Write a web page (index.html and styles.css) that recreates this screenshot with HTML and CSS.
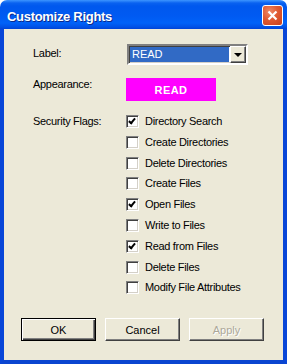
FILE: index.html
```html
<!DOCTYPE html>
<html lang="en">
<head>
    <meta charset="UTF-8">
    <title>Customize Rights</title>
    <link rel="stylesheet" href="styles.css">
</head>
<body>
    <div class="window">
        <div class="titlebar">
            <span class="title">Customize Rights</span>
            <button class="close" type="button" aria-label="Close">
                <svg width="11" height="11" viewBox="0 0 11 11">
                    <path d="M1.5 1.5 L9.5 9.5 M9.5 1.5 L1.5 9.5" stroke="#fff" stroke-width="2.2" fill="none"/>
                </svg>
            </button>
        </div>
        <div class="body">
            <div class="row row-label-line">
                <div class="field-label">Label:</div>
                <div class="select">
                    <div class="select-value">READ</div>
                    <div class="select-arrow"><span class="tri"></span></div>
                </div>
            </div>
            <div class="row row-appearance">
                <div class="field-label">Appearance:</div>
                <div class="swatch">READ</div>
            </div>
            <div class="row row-flags">
                <div class="field-label">Security Flags:</div>
                <div class="flags">
                    <label class="flag"><span class="box checked"></span>Directory Search</label>
                    <label class="flag"><span class="box"></span>Create Directories</label>
                    <label class="flag"><span class="box"></span>Delete Directories</label>
                    <label class="flag"><span class="box"></span>Create Files</label>
                    <label class="flag"><span class="box checked"></span>Open Files</label>
                    <label class="flag"><span class="box"></span>Write to Files</label>
                    <label class="flag"><span class="box checked"></span>Read from Files</label>
                    <label class="flag"><span class="box"></span>Delete Files</label>
                    <label class="flag"><span class="box"></span>Modify File Attributes</label>
                </div>
            </div>
            <div class="buttons">
                <button type="button" class="btn default">OK</button>
                <button type="button" class="btn">Cancel</button>
                <button type="button" class="btn disabled">Apply</button>
            </div>
        </div>
    </div>
</body>
</html>
```

FILE: styles.css
```css
html, body {
    margin: 0;
    padding: 0;
    background: #fff;
}
body {
    font-family: "Liberation Sans", Arial, sans-serif;
    font-size: 11px;
    color: #000;
}
.window {
    width: 287px;
    height: 364px;
    display: flex;
    flex-direction: column;
}
.titlebar {
    height: 29px;
    display: flex;
    justify-content: space-between;
    align-items: flex-start;
    border-radius: 7px 7px 0 0;
    background: linear-gradient(#3d95ff 0, #0a62f0 3px, #0058ee 6px, #005af2 16px, #0062f8 23px, #0051e6 27px, #0043d6 29px);
}
.title {
    margin: 9px 0 0 7px;
    font-weight: bold;
    font-size: 13px;
    line-height: 15px;
    letter-spacing: -0.3px;
    color: #fff;
    text-shadow: 1px 1px #0b2a8a;
}
.close {
    width: 21px;
    height: 21px;
    margin: 5px 4px 0 0;
    padding: 0;
    border: 1px solid #fff;
    border-radius: 3px;
    background: radial-gradient(circle at 35% 30%, #ee8a68 0, #e05a32 45%, #c8401c 100%);
    display: flex;
    align-items: center;
    justify-content: center;
}
.body {
    flex: 1;
    background: #ece9d8;
    border: 4px solid #0751e0;
    border-top: 0;
    border-left-color: #0846d8;
    border-right-color: #0846d8;
    border-bottom-color: #0a45d0;
    display: flex;
    flex-direction: column;
    padding: 15px 0 0 29px;
    letter-spacing: -0.3px;
}
.row {
    display: flex;
}
.field-label {
    width: 93px;
    line-height: 13px;
}
.row-label-line .field-label {
    margin-top: 3px;
}
.row-appearance {
    margin-top: 13px;
}
.row-flags {
    margin-top: 14px;
}
.select {
    width: 117px;
    height: 17px;
    margin-left: 1px;
    display: flex;
    background: #fff;
    border: 2px solid;
    border-color: #808080 #fff #fff #808080;
    box-shadow: inset 1px 1px #404040, inset -1px -1px #d4d0c8;
    padding: 0;
}
.select-value {
    flex: 1;
    margin: 1px;
    background: #316ac5;
    color: #fff;
    line-height: 15px;
    padding-left: 2px;
    letter-spacing: 0;
}
.select-arrow {
    width: 16px;
    display: flex;
    align-items: center;
    justify-content: center;
    background: #ece9d8;
    box-sizing: border-box;
    border: 1px solid;
    border-color: #fff #404040 #404040 #fff;
    box-shadow: inset -1px -1px #808080;
}
.tri {
    width: 0;
    height: 0;
    border-left: 4px solid transparent;
    border-right: 4px solid transparent;
    border-top: 4px solid #000;
    margin-top: 1px;
}
.swatch {
    width: 90px;
    height: 23px;
    background: #ff00ff;
    color: #fff;
    font-weight: bold;
    letter-spacing: 0.4px;
    display: flex;
    align-items: center;
    justify-content: center;
}
.flags {
    display: flex;
    flex-direction: column;
}
.flag {
    height: 20.8px;
    display: flex;
    align-items: flex-start;
    line-height: 13px;
}
.box {
    width: 13px;
    height: 13px;
    box-sizing: border-box;
    margin-right: 6px;
    background: #fff;
    border: 1px solid;
    border-color: #808080 #fff #fff #808080;
    box-shadow: inset 1px 1px #404040, inset -1px -1px #d4d0c8;
    position: relative;
}
.box.checked::after {
    content: "";
    position: absolute;
    left: 3px;
    top: 1px;
    width: 2px;
    height: 5px;
    border: solid #000;
    border-width: 0 2px 2px 0;
    transform: rotate(40deg);
}
.buttons {
    margin-top: auto;
    margin-left: -12px;
    padding-bottom: 19px;
    display: flex;
    gap: 9px;
}
.btn {
    width: 75px;
    height: 23px;
    padding: 0;
    font-family: "Liberation Sans", Arial, sans-serif;
    font-size: 11px;
    color: #000;
    background: #ece9d8;
    border: 1px solid;
    border-color: #fff #404040 #404040 #fff;
    box-shadow: inset -1px -1px #808080;
}
.btn.default {
    border: 1px solid #000;
    box-shadow: inset 1px 1px #fff, inset -1px -1px #404040, inset -2px -2px #808080;
}
.btn.disabled {
    color: #aca899;
    text-shadow: 1px 1px #fff;
}
```
